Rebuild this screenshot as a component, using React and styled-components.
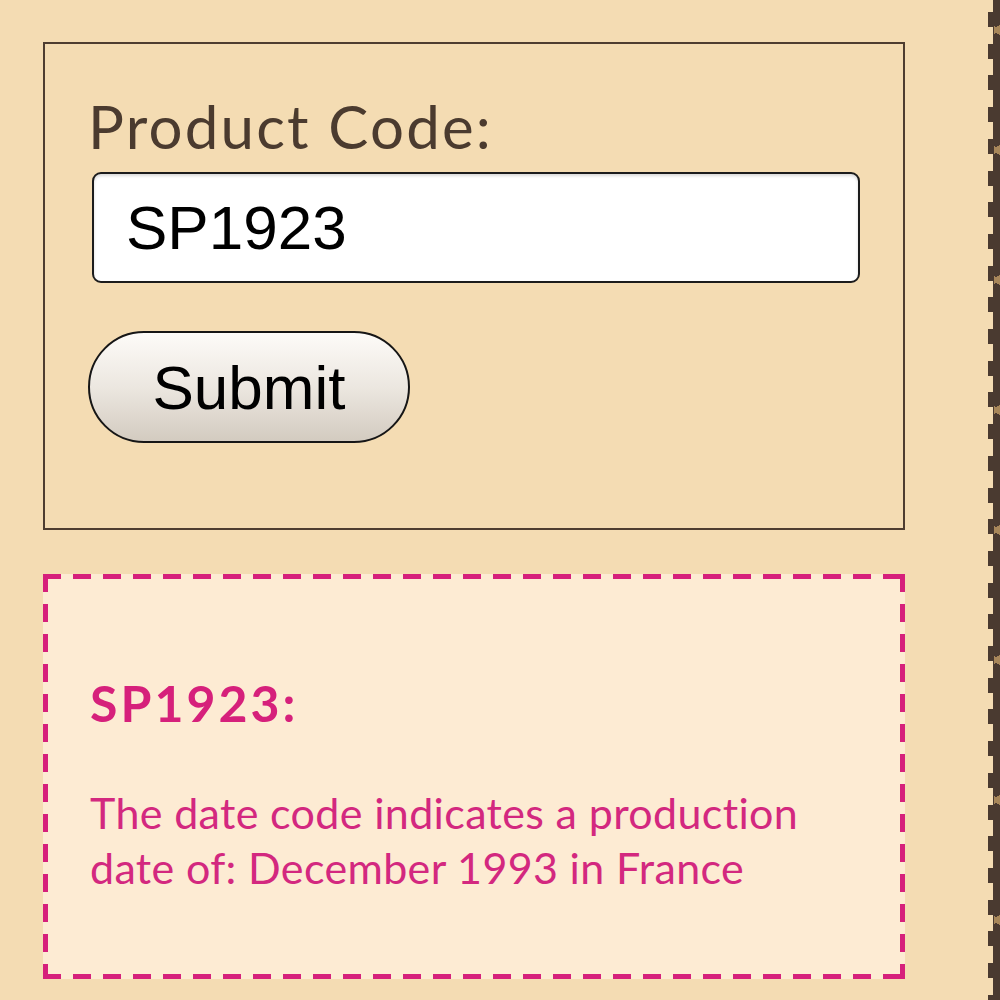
import React from "react";
import styled, { createGlobalStyle } from "styled-components";

const Global = createGlobalStyle`
  html, body { margin: 0; padding: 0; background: #f4dcb3; }
  * { box-sizing: border-box; }
`;

const Page = styled.div`
  position: relative;
  width: 1000px;
  height: 1000px;
  overflow: hidden;
  padding: 42px 0 0 43px;
  background: #f4dcb3;
  font-family: Lato, "Noto Sans", sans-serif;
`;

const EdgeBand = styled.div`
  position: absolute;
  top: 0;
  right: 0;
  width: 12px;
  height: 1000px;
  background:
    linear-gradient(to right, transparent 0 5px, #4a3a30 5px 12px),
    repeating-linear-gradient(to bottom, transparent 0 12px, #4a3a30 12px 27px, transparent 27px 31.7px);
`;

const BandMotif = styled.div`
  position: absolute;
  right: 0;
  width: 6px;
  height: 20px;
  top: ${(p) => p.$top}px;
  background:
    linear-gradient(150deg, transparent 35%, #a8875a 35% 60%, transparent 60%),
    linear-gradient(30deg, transparent 35%, #a8875a 35% 60%, transparent 60%);
`;

const FormCard = styled.div`
  width: 862px;
  height: 488px;
  border: 2px solid #4e3d30;
  padding: 48px 0 0 43px;
  display: flex;
  flex-direction: column;
  align-items: flex-start;
`;

const Label = styled.label`
  display: block;
  font-size: 60px;
  line-height: 68px;
  letter-spacing: 2.2px;
  color: #4b3b2f;
`;

const CodeInput = styled.input`
  margin-top: 12px;
  margin-left: 4px;
  width: 768px;
  height: 111px;
  border: 2px solid #1c1c1c;
  border-radius: 9px;
  background: #fff;
  box-shadow: inset 0 2px 3px rgba(0,0,0,0.15);
  font-family: "Liberation Sans", Arial, sans-serif;
  font-size: 62px;
  color: #000;
  padding: 0 0 0 32px;
  outline: none;
`;

const SubmitButton = styled.button`
  margin-top: 48px;
  width: 322px;
  height: 112px;
  border: 2px solid #161616;
  border-radius: 56px;
  background: linear-gradient(to bottom, #fdfbf8 0%, #ece7e0 50%, #d3cbc0 100%);
  font-family: "Liberation Sans", Arial, sans-serif;
  font-size: 62px;
  color: #000;
  padding: 0;
  cursor: pointer;
`;

const dashH = "repeating-linear-gradient(to right, #d6207b 0 18px, transparent 18px 30px)";
const dashV = "repeating-linear-gradient(to bottom, #d6207b 0 18px, transparent 18px 30px)";

const ResultCard = styled.div`
  margin-top: 44px;
  width: 862px;
  height: 405px;
  background:
    ${dashH} left top / 100% 5px no-repeat,
    ${dashH} left bottom / 100% 5px no-repeat,
    ${dashV} left top / 5px 100% no-repeat,
    ${dashV} right top / 5px 100% no-repeat,
    #fdebd3;
  padding: 100px 0 0 47px;
  color: #d5247e;
`;

const ResultTitle = styled.h2`
  margin: 0;
  font-size: 50px;
  font-weight: 700;
  letter-spacing: 3px;
  line-height: 58px;
  color: #d6207b;
`;

const ResultText = styled.p`
  margin: 53px 0 0 0;
  font-size: 43px;
  line-height: 55px;
  letter-spacing: 0.35px;
  color: #d3287f;
  width: 750px;
`;

export default function App() {
  return (
    <Page>
      <Global />
      <FormCard>
        <Label htmlFor="code">Product Code:</Label>
        <CodeInput id="code" defaultValue="SP1923" />
        <SubmitButton>Submit</SubmitButton>
      </FormCard>
      <ResultCard>
        <ResultTitle>SP1923:</ResultTitle>
        <ResultText>
          The date code indicates a production date of: December 1993 in France
        </ResultText>
      </ResultCard>
      <EdgeBand />
      {[20, 140, 270, 400, 520, 650, 790, 910].map((t) => (
        <BandMotif key={t} $top={t} />
      ))}
    </Page>
  );
}
